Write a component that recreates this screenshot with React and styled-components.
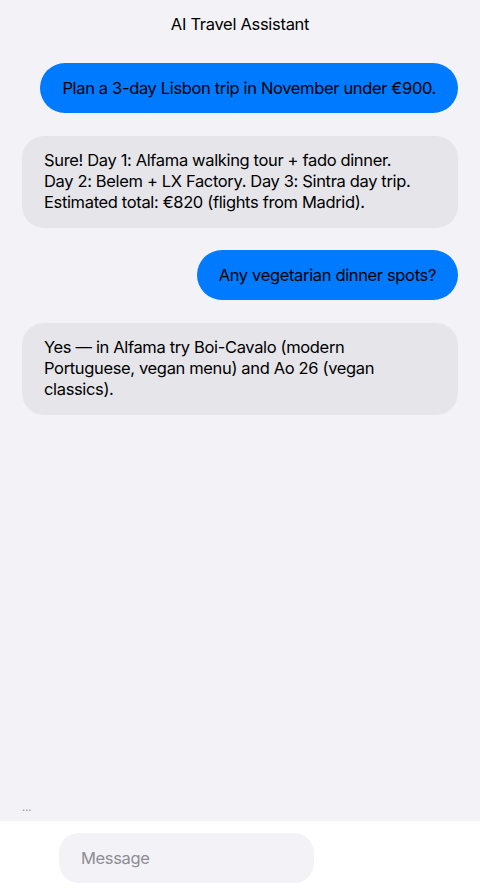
import React from "react"
import styled, {createGlobalStyle} from "styled-components"

const GlobalStyle = createGlobalStyle`
  html, body {
    margin: 0;
    padding: 0;
    background: #f2f2f7;
  }
  body {
    font-family: Inter, "Liberation Sans", sans-serif;
    -webkit-font-smoothing: antialiased;
  }
`

const messages = [
  {from: "user", text: "Plan a 3-day Lisbon trip in November under €900."},
  {
    from: "bot",
    text: "Sure! Day 1: Alfama walking tour + fado dinner.\nDay 2: Belem + LX Factory. Day 3: Sintra day trip.\nEstimated total: €820 (flights from Madrid).",
  },
  {from: "user", text: "Any vegetarian dinner spots?"},
  {
    from: "bot",
    text: "Yes — in Alfama try Boi-Cavalo (modern Portuguese, vegan menu) and Ao 26 (vegan classics).",
  },
]

function App() {
  return (
    <>
      <GlobalStyle />
      <Screen>
        <Header>AI Travel Assistant</Header>
        <Thread>
          {messages.map((m, i) => (
            <Bubble key={i} $mine={m.from === "user"}>
              {m.text}
            </Bubble>
          ))}
        </Thread>
        <Typing>...</Typing>
        <Composer>
          <Input placeholder="Message" />
        </Composer>
      </Screen>
    </>
  )
}

const Screen = styled.div`
  min-height: 100vh;
  display: flex;
  flex-direction: column;
  background: #f2f2f7;
`

const Header = styled.div`
  padding: 13px 0 0;
  height: 33px;
  text-align: center;
  font-size: 16.5px;
  line-height: 22px;
  letter-spacing: -0.3px;
  font-weight: 400;
  color: #000;
`

const Thread = styled.div`
  flex: 1;
  display: flex;
  flex-direction: column;
  gap: 22.5px;
  padding: 17px 22px;
`

const Bubble = styled.div`
  align-self: ${(p) => (p.$mine ? "flex-end" : "stretch")};
  background: ${(p) => (p.$mine ? "#007aff" : "#e5e5ea")};
  color: #000;
  border-radius: ${(p) => (p.$mine ? "25px" : "22px")};
  padding: 14.5px 22px;
  font-size: 16.5px;
  line-height: 21px;
  white-space: pre-line;
  letter-spacing: -0.35px;
`

const Typing = styled.div`
  padding: 0 22px 4px;
  height: 17px;
  font-size: 11px;
  line-height: 14px;
  color: #8e8e93;
`

const Composer = styled.div`
  background: #fff;
  height: 73px;
  padding: 12px 0 0 59px;
  box-sizing: border-box;
`

const Input = styled.input`
  width: 255px;
  height: 50px;
  box-sizing: border-box;
  border: none;
  outline: none;
  border-radius: 20px;
  background: #f2f2f7;
  padding: 0 22px;
  font-family: Inter, "Liberation Sans", sans-serif;
  font-size: 16.5px;
  letter-spacing: -0.35px;
  color: #000;

  &::placeholder {
    color: #8e8e93;
  }
`

export default App
